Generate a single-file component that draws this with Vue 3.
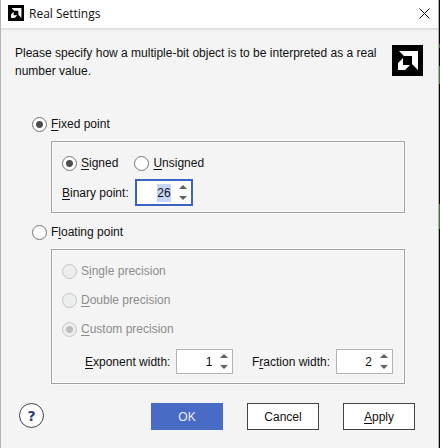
<script setup>
import { onMounted, ref } from 'vue'

const mode = ref('fixed')
const sign = ref('signed')
const precision = ref('custom')
const binaryPoint = ref(26)
const exponentWidth = ref(1)
const fractionWidth = ref(2)
const binaryInput = ref(null)

onMounted(() => {
  binaryInput.value.focus()
  binaryInput.value.select()
})
</script>

<template>
  <div class="screen">
    <main class="dialog">
      <header class="titlebar">
        <svg class="app-icon" viewBox="0 0 31 31" aria-hidden="true">
          <rect width="31" height="31" />
          <path d="M7 6H26V25L20 19V11H12Z M6 18L11 13V20H18L13 25H6Z" fill="#fff" />
        </svg>
        <h1 class="title">Real Settings</h1>
        <button class="close" type="button" aria-label="Close">
          <svg viewBox="0 0 11 11" aria-hidden="true">
            <path d="M0.5 0.5L10.5 10.5M10.5 0.5L0.5 10.5" fill="none" stroke="#111" />
          </svg>
        </button>
      </header>

      <section class="intro">
        <p>Please specify how a multiple-bit object is to be interpreted as a real number value.</p>
        <svg class="logo" viewBox="0 0 31 31" aria-hidden="true">
          <rect width="31" height="31" />
          <path d="M7 6H26V25L20 19V11H12Z M6 18L11 13V20H18L13 25H6Z" fill="#fff" />
        </svg>
      </section>

      <form class="form" @submit.prevent>
        <label class="option"><input v-model="mode" type="radio" name="mode" value="fixed" /><span><u>F</u>ixed point</span></label>
        <div class="group fixed">
          <div class="row signs">
            <label class="option"><input v-model="sign" type="radio" name="sign" value="signed" /><span><u>S</u>igned</span></label>
            <label class="option"><input v-model="sign" type="radio" name="sign" value="unsigned" /><span><u>U</u>nsigned</span></label>
          </div>
          <div class="row field">
            <label for="binary"><u>B</u>inary point:</label>
            <div class="spinner active">
              <input id="binary" ref="binaryInput" v-model.number="binaryPoint" type="text" inputmode="numeric" />
              <div class="steps">
                <button type="button" aria-label="Increase binary point" @click="binaryPoint++"><i class="up"></i></button>
                <button type="button" aria-label="Decrease binary point" @click="binaryPoint--"><i class="down"></i></button>
              </div>
            </div>
          </div>
        </div>

        <label class="option"><input v-model="mode" type="radio" name="mode" value="floating" /><span>F<u>l</u>oating point</span></label>
        <div class="group floating">
          <label class="option"><input v-model="precision" type="radio" name="precision" value="single" disabled /><span>S<u>i</u>ngle precision</span></label>
          <label class="option"><input v-model="precision" type="radio" name="precision" value="double" disabled /><span><u>D</u>ouble precision</span></label>
          <label class="option"><input v-model="precision" type="radio" name="precision" value="custom" disabled /><span><u>C</u>ustom precision</span></label>
          <div class="row widths">
            <div class="row field">
              <label for="exponent"><u>E</u>xponent width:</label>
              <div class="spinner">
                <input id="exponent" v-model.number="exponentWidth" type="text" inputmode="numeric" />
                <div class="steps">
                  <button type="button" aria-label="Increase exponent width" @click="exponentWidth++"><i class="up"></i></button>
                  <button type="button" aria-label="Decrease exponent width" @click="exponentWidth--"><i class="down"></i></button>
                </div>
              </div>
            </div>
            <div class="row field">
              <label for="fraction">F<u>r</u>action width:</label>
              <div class="spinner">
                <input id="fraction" v-model.number="fractionWidth" type="text" inputmode="numeric" />
                <div class="steps">
                  <button type="button" aria-label="Increase fraction width" @click="fractionWidth++"><i class="up"></i></button>
                  <button type="button" aria-label="Decrease fraction width" @click="fractionWidth--"><i class="down"></i></button>
                </div>
              </div>
            </div>
          </div>
        </div>
      </form>

      <footer class="actions">
        <button class="help" type="button">?</button>
        <button class="btn primary" type="button">OK</button>
        <button class="btn" type="button">Cancel</button>
        <button class="btn" type="button"><u>A</u>pply</button>
      </footer>
    </main>
  </div>
</template>

<style>
body {
  margin: 0;
}
</style>

<style scoped>
.screen {
  box-sizing: border-box;
  min-height: 100vh;
  display: flex;
  padding-right: 1px;
  background: linear-gradient(#080808 44px, #286028 44px 48px, #080808 48px 66px, #347a2c 66px 84px, #080808 84px 204px, #347a2c 204px 229px, #080808 229px);
  font: 12px/18px "Liberation Sans", Arial, sans-serif;
  color: #111;
}
.screen * {
  box-sizing: border-box;
}
.dialog {
  flex: 1;
  border: solid #b4b4b4;
  border-width: 0 1px;
  background: #f4f4f4;
}
button,
input {
  margin: 0;
  padding: 0;
  border: 0;
  font: inherit;
  color: inherit;
  background: none;
}
u {
  text-decoration-thickness: 1px;
  text-underline-offset: 2px;
}
.titlebar {
  display: flex;
  align-items: center;
  height: 30px;
  padding: 0 8px 2px 7px;
  border-bottom: 2px solid #e1e1e1;
  background: #fff;
}
.app-icon {
  width: 16px;
  height: 16px;
}
.title {
  flex: 1;
  margin: 0 0 0 5px;
  padding-top: 2px;
  font: 400 12px/18px "Open Sans", "Noto Sans", sans-serif;
}
.close {
  display: flex;
}
.close svg {
  width: 11px;
  height: 11px;
}
.intro {
  display: flex;
  justify-content: space-between;
  align-items: flex-start;
  padding: 14px 15px 0 14px;
}
.intro p {
  flex: 1;
  margin: 0;
  padding-right: 12px;
}
.logo {
  width: 31px;
  height: 31px;
  margin-top: 1px;
}
.form {
  padding: 35px 33px 0 31px;
}
.option {
  display: flex;
  align-items: center;
  gap: 4px;
}
.option input {
  appearance: none;
  width: 15px;
  height: 15px;
  border: 1px solid #747474;
  border-radius: 50%;
  background: #fff;
}
.option input:checked {
  background: radial-gradient(circle, #4c4c4c 3px, #fff 4px);
}
.option input:disabled {
  border-color: #c4c4c4;
  background: #eceeee;
}
.option input:disabled:checked {
  background: radial-gradient(circle, #bcbcbc 3px, #eceeee 4px);
}
.option input:disabled + span {
  color: #8c8c8c;
}
.row {
  display: flex;
  align-items: center;
}
.group {
  margin-left: 19px;
  border: 1px solid #a2a2a2;
  box-shadow: 0 0 0 1px #fafafa, inset 0 0 0 1px #fafafa;
}
.fixed {
  margin-top: 8px;
  margin-bottom: 10px;
  padding: 12px 10px 6px;
}
.signs {
  gap: 16px;
}
.field {
  gap: 6px;
}
.signs + .field {
  margin-top: 7px;
}
.floating {
  margin-top: 8px;
  padding: 12px 10px 9px;
}
.floating > .option {
  margin-bottom: 11px;
}
.widths {
  justify-content: space-between;
  padding: 0 1px 0 23px;
}
.spinner {
  display: flex;
  width: 57px;
  height: 25px;
  border: 1px solid #b4b4b4;
  background: #fff;
}
.spinner.active {
  width: 58px;
  height: 27px;
  border: 2px solid #3c62c0;
}
.spinner input {
  flex: 1;
  min-width: 0;
  margin-right: 4px;
  text-align: right;
  outline: none;
}
.spinner input::selection {
  background: #c4d6fc;
  color: #111;
}
.steps {
  display: flex;
  flex-direction: column;
  width: 16px;
}
.steps button {
  flex: 1;
  display: flex;
  align-items: center;
  justify-content: center;
}
.steps i {
  border: solid transparent;
  border-width: 0 4px;
}
.steps .up {
  border-bottom: 4px solid #606060;
}
.steps .down {
  border-top: 4px solid #606060;
}
.actions {
  display: flex;
  align-items: flex-start;
  gap: 24px;
  padding: 19px 23px 18px 18px;
}
.help {
  width: 25px;
  height: 25px;
  margin-right: auto;
  border: 1px solid #444;
  border-radius: 50%;
  background: #fff;
  color: #283c80;
  font: 700 14px/18px "DejaVu Sans", sans-serif;
}
.btn {
  width: 72px;
  height: 27px;
  border: 1px solid #444;
  background: #fff;
}
.primary {
  border-color: #486cc6;
  background: #486cc6;
  color: #e8eefc;
}
</style>
